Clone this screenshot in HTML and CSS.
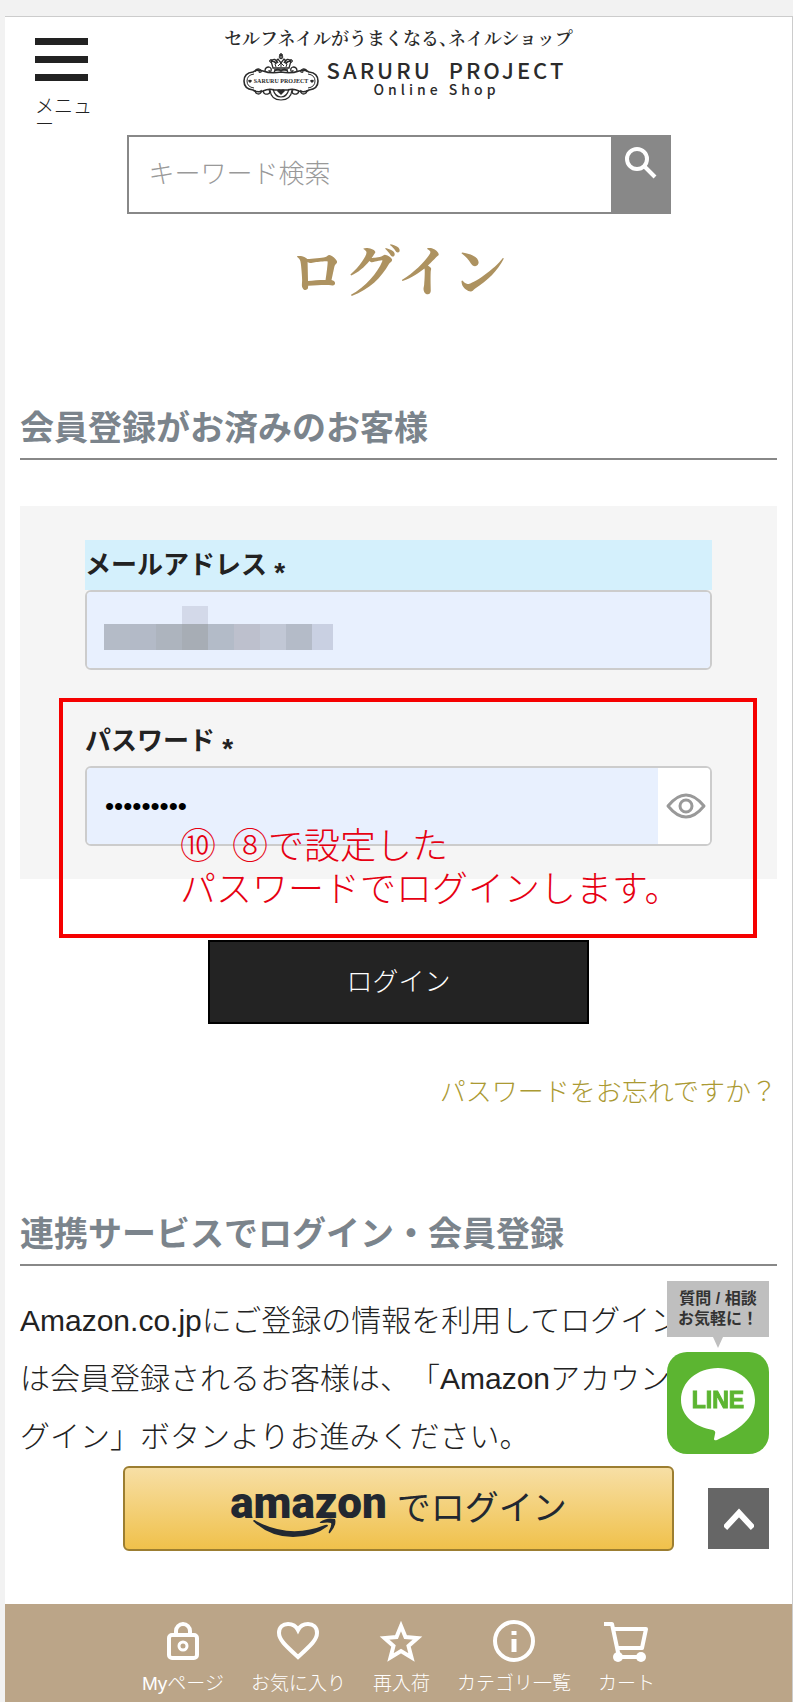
FILE: index.html
```html
<!DOCTYPE html>
<html lang="ja">
<head>
	<meta charset="UTF-8">
	<meta name="viewport" content="width=device-width, initial-scale=1">
	<title>ログイン | SARURU PROJECT</title>
	<link rel="stylesheet" href="styles.css">
</head>
<body>
	<div class="page">
		<header class="header">
			<button type="button" class="menuBtn">
				<span class="bar"></span>
				<span class="bar"></span>
				<span class="bar"></span>
				<span class="txt">メニュー</span>
			</button>
			<a href="#" class="logo">
				<span class="catch">セルフネイルがうまくなる、ネイルショップ</span>
				<span class="brand">
					<svg class="emblem" viewBox="0 0 76 48" width="76" height="48" fill="none" stroke="#2b2b2b" aria-hidden="true">
						<path d="M30 15l-2-7q4 0 5 3q0-4 2-5l3 4l3-4q2 1 2 5q1-3 5-3l-2 7z" stroke-width="1.3"/>
						<path d="M33 14l-1-3M38 14v-4M43 14l1-3M35 13l3-3l3 3" stroke-width="1"/>
						<path d="M38 0v6M36 2h4M28 8q4-4 7 2M48 8q-4-4-7 2M31 17h14" stroke-width="1.4"/>
						<circle cx="28" cy="8" r="1.4"/><circle cx="48" cy="8" r="1.4"/><circle cx="38" cy="4" r="1.8"/>
						<path d="M10 19q4-3 10-1q8 3 18 1q10 2 18-1q6-2 10 1q9 1 9 9t-9 9q-4 3-10 1q-6-3-11-1h-14q-5-2-11 1q-6 2-10-1q-9-1-9-9t9-9z" stroke-width="1.6"/>
						<path d="M11 21q-7 1-7 7t7 7M65 21q7 1 7 7t-7 7" stroke-width="1"/>
						<path d="M12 19q0-3 4-3q3 1 2 3q-2 1-2-1M22 18q0-4 4-4q3 1 2 4q-2 1-2-1M64 19q0-3-4-3q-3 1-2 3q2 1 2-1M54 18q0-4-4-4q-3 1-2 4q2 1 2-1M31 19q3-5 7-1q4-4 7 1" stroke-width="1.3"/>
						<path d="M12 37q0 4 4 4q3-1 2-4M20 38q1 4 5 3q3-1 1-4M64 37q0 4-4 4q-3-1-2-4M56 38q-1 4-5 3q-3-1-1-4" stroke-width="1.3"/>
						<path d="M27 37q1 10 11 10t11-10M30 36q2 8 8 8t8-8" stroke-width="1.2"/>
						<path d="M38 42l-4-4q1-3 4-1q3-2 4 1zM7 30l-2-2q1-2 2-1q1-1 2 1zM69 30l-2-2q1-2 2-1q1-1 2 1z" fill="#2b2b2b" stroke="none"/>
						<text x="38" y="30" class="emblemText" text-anchor="middle">SARURU PROJECT</text>
					</svg>
					<span class="names">
						<span class="name">SARURU&nbsp;&nbsp;PROJECT</span>
						<span class="sub">Online Shop</span>
					</span>
				</span>
			</a>
		</header>

		<form class="search" action="#">
			<input type="text" placeholder="キーワード検索" aria-label="キーワード検索">
			<button type="submit" aria-label="検索">
				<svg viewBox="0 0 34 34" width="34" height="34" fill="none" stroke="#fff" aria-hidden="true">
					<circle cx="13" cy="13" r="10" stroke-width="4"/>
					<path d="M20 20l11 11" stroke-width="4"/>
				</svg>
			</button>
		</form>

		<main class="main">
			<h1>ログイン</h1>

			<section class="member">
				<h2>会員登録がお済みのお客様</h2>
				<form action="#">
					<div class="formBox">
						<div class="row">
							<label for="mail" class="on">メールアドレス <span class="req">*</span></label>
							<div class="field">
								<input type="email" id="mail">
								<svg class="mosaic" viewBox="0 0 229 44" width="229" height="44" aria-hidden="true">
									<path d="M78 0h26v18h-26z" fill="#d3d9e9"/>
									<path d="M0 18h26v26H0z" fill="#b4bbc7"/>
									<path d="M26 18h26v26H26z" fill="#b3bac7"/>
									<path d="M52 18h26v26H52z" fill="#adb4be"/>
									<path d="M78 18h26v26H78z" fill="#a7adb5"/>
									<path d="M104 18h26v26h-26z" fill="#b3bbc8"/>
									<path d="M130 18h26v26h-26z" fill="#bdc0cd"/>
									<path d="M156 18h26v26h-26z" fill="#c1c7d5"/>
									<path d="M182 18h26v26h-26z" fill="#b4bbc8"/>
									<path d="M208 18h21v26h-21z" fill="#c9d0e2"/>
								</svg>
							</div>
						</div>
						<div class="row">
							<label for="pass">パスワード <span class="req">*</span></label>
							<div class="field">
								<input type="password" id="pass" value="xxxxxxxxx">
								<button type="button" class="eye" aria-label="パスワードを表示">
									<svg viewBox="0 0 40 26" width="40" height="26" fill="none" stroke="#999" stroke-width="3" aria-hidden="true">
										<path d="M2 13Q11 2 20 2t18 11Q29 24 20 24T2 13z" stroke-linejoin="round"/>
										<circle cx="20" cy="13" r="6"/>
									</svg>
								</button>
							</div>
						</div>
						<!-- 手順の説明 -->
						<div class="note">
							<p>⑩&nbsp;&nbsp;⑧で設定した<br>パスワードでログインします。</p>
						</div>
					</div>
					<button type="submit" class="loginBtn">ログイン</button>
				</form>
				<p class="forgot"><a href="#">パスワードをお忘れですか？</a></p>
			</section>

			<section class="service">
				<h2>連携サービスでログイン・会員登録</h2>
				<p class="lead">Amazon.co.jpにご登録の情報を利用してログインまた<br>は会員登録されるお客様は、「Amazonアカウントでロ<br>グイン」ボタンよりお進みください。</p>
				<button type="button" class="amazonBtn">
					<span class="amazon">amazon
						<svg viewBox="0 0 86 20" width="86" height="20" fill="#222831" aria-hidden="true">
							<path d="M1 3Q2 1 4 3Q38 21 73 7Q76 6 76 8Q62 19 41 19Q18 19 1 3z"/>
							<path d="M68 4Q75-1 83 1Q85 7 78 15Q76 16 77 13Q80 7 79 5Q76 4 70 5Q67 5 68 4z"/>
						</svg>
					</span>
					<span class="with">でログイン</span>
				</button>
			</section>
		</main>

		<nav class="footNav">
			<a href="#">
				<svg viewBox="0 0 44 44" width="44" height="44" fill="none" stroke="#fff" stroke-width="4" aria-hidden="true">
					<rect x="8" y="15" width="28" height="23" rx="3"/>
					<path d="M15 15v-4a7 7 0 0 1 14 0v4"/>
					<circle cx="22" cy="26" r="4" stroke-width="3"/>
				</svg>
				Myページ
			</a>
			<a href="#">
				<svg viewBox="0 0 44 44" width="44" height="44" fill="none" stroke="#fff" stroke-width="4" aria-hidden="true">
					<path d="M22 37C10 26 3 20 3 13C3 7 7 4 12 4C16 4 20 6 22 10C24 6 28 4 32 4C37 4 41 7 41 13C41 20 34 26 22 37z"/>
				</svg>
				お気に入り
			</a>
			<a href="#">
				<svg viewBox="0 0 44 44" width="44" height="44" fill="none" stroke="#fff" stroke-width="4" aria-hidden="true">
					<path d="M22 6l4.500 11 12 1-9 8 3 11.500-10.500-6.500-10.500 6.500 3-11.500-9-8 12-1z"/>
				</svg>
				再入荷
			</a>
			<a href="#">
				<svg viewBox="0 0 44 44" width="44" height="44" fill="none" stroke="#fff" stroke-width="4" aria-hidden="true">
					<circle cx="22" cy="21" r="19"/>
					<path d="M22 11v4M22 19v13" stroke-width="5"/>
				</svg>
				カテゴリ一覧
			</a>
			<a href="#">
				<svg viewBox="0 0 44 44" width="44" height="44" fill="none" stroke="#fff" stroke-width="4" aria-hidden="true">
					<path d="M0 4h8l7 33h22M10 9h32l-4 19H14" stroke-linejoin="round"/>
					<circle cx="14" cy="37" r="5" fill="#fff" stroke="none"/>
					<circle cx="37" cy="37" r="5" fill="#fff" stroke="none"/>
				</svg>
				カート
			</a>
		</nav>
	</div>

	<div class="floating">
		<a href="#" class="line">
			<span class="balloon">質問 / 相談<br>お気軽に！</span>
			<svg viewBox="0 0 102 102" width="102" height="102" aria-hidden="true">
				<rect width="102" height="102" rx="20" fill="#5cb531"/>
				<path d="M51 16C30 16 14 30 14 48C14 64 28 75 46 78Q49 79 48 82L47 87Q47 89 50 88C72 78 88 66 88 48C88 30 72 16 51 16z" fill="#fff"/>
				<text x="51" y="56" class="lineText" text-anchor="middle">LINE</text>
			</svg>
		</a>
		<a href="#" class="toTop" aria-label="ページの先頭へ">
			<svg viewBox="0 0 30 24" width="30" height="24" fill="none" stroke="#fff" stroke-width="6" aria-hidden="true">
				<path d="M1 21L15 6l14 15"/>
			</svg>
		</a>
	</div>
</body>
</html>
```
FILE: styles.css
```css
*{
	margin: 0;
	padding: 0;
	box-sizing: border-box;
}
body{
	padding: 16px 0 0 5px;
	background-color: #f2f2f2;
	color: #222;
	font-family: "Liberation Sans","Noto Sans CJK JP",sans-serif;
	font-size: 26px;
	font-weight: 300;
}
a{
	color: inherit;
	text-decoration: none;
}
button,input{
	border: none;
	font: inherit;
}
button{
	cursor: pointer;
}
svg{
	display: block;
}
.page{
	display: flex;
	flex-direction: column;
	min-height: calc(100vh - 16px);
	border-top: 1px solid #ccc;
	border-right: 1px solid #ccc;
	background-color: #fff;
}

/* header */
.header{
	display: grid;
	grid-template-columns: 90px 1fr 90px;
	height: 118px;
}
.menuBtn{
	display: flex;
	flex-direction: column;
	gap: 11px;
	padding: 21px 0 0 30px;
	background: none;
	color: #222;
	font-size: 19px;
	line-height: 18px;
	text-align: left;
}
.menuBtn .bar{
	width: 53px;
	height: 7px;
	background-color: #222;
}
.menuBtn .txt{
	width: 58px;
	padding-top: 6px;
	word-break: break-all;
	line-break: anywhere;
}
.logo{
	display: flex;
	flex-direction: column;
	align-items: center;
	padding-top: 8px;
	color: #2b2b2b;
}
.logo .catch{
	font-family: "Noto Serif CJK JP","Noto Sans CJK JP",serif;
	font-size: 18px;
	font-weight: 600;
	line-height: 24px;
	font-feature-settings: "halt";
	white-space: nowrap;
}
.logo .brand{
	display: flex;
	gap: 8px;
	margin-top: 4px;
	padding-left: 12px;
}
.emblemText{
	fill: #2b2b2b;
	stroke: none;
	font-family: "Liberation Serif",serif;
	font-size: 6px;
	font-weight: bold;
}
.logo .names{
	display: flex;
	flex-direction: column;
	align-items: center;
	padding-top: 4px;
	font-family: "Noto Sans CJK JP",sans-serif;
	font-weight: 500;
	white-space: nowrap;
}
.logo .name{
	font-size: 22px;
	line-height: 24px;
	letter-spacing: 3px;
}
.logo .sub{
	padding-right: 20px;
	font-size: 14px;
	line-height: 16px;
	letter-spacing: 4px;
}

/* search */
.search{
	display: flex;
	align-self: center;
	width: 544px;
	max-width: 100%;
	height: 79px;
	border: 2px solid #888;
}
.search input{
	flex: 1;
	min-width: 0;
	padding: 0 20px;
	outline: none;
}
.search input::placeholder{
	color: #999;
}
.search button{
	display: flex;
	align-items: flex-start;
	width: 58px;
	padding: 9px 0 0 13px;
	background-color: #888;
}

/* main */
.main{
	flex: 1;
	padding: 0 15px 52px;
}
h1{
	padding-top: 14px;
	color: #ad9260;
	font-family: "Noto Serif CJK JP","Noto Sans CJK JP",serif;
	font-size: 55px;
	font-weight: 700;
	line-height: 80px;
	text-align: center;
}
h2{
	border-bottom: 2px solid #888;
	color: #7b848c;
	font-size: 34px;
	font-weight: bold;
	line-height: 48px;
	padding-bottom: 6px;
}
.member h2{
	margin: 96px 0 46px;
}
.formBox{
	position: relative;
	display: flex;
	flex-direction: column;
	gap: 46px;
	padding: 34px 65px 33px;
	background-color: #f5f5f5;
}
.row label{
	display: block;
	font-weight: bold;
	line-height: 50px;
}
.row label.on{
	background-color: #d4f0fc;
}
.row .req{
	font-size: 28px;
	vertical-align: -8px;
	line-height: 24px;
}
.field{
	position: relative;
	display: flex;
	height: 80px;
	border: 2px solid #ccc;
	border-radius: 6px;
	background-color: #fff;
	overflow: hidden;
}
.field input{
	flex: 1;
	min-width: 0;
	padding: 0 18px;
	background-color: #e8f0fe;
	color: #000;
	font-family: "Liberation Sans",sans-serif;
	font-size: 26px;
	outline: none;
}
.field .mosaic{
	position: absolute;
	left: 17px;
	top: 14px;
}
.field .eye{
	display: flex;
	align-items: center;
	justify-content: center;
	width: 52px;
	padding-left: 4px;
	background-color: #fff;
}
.note{
	position: absolute;
	top: 192px;
	left: 39px;
	right: 20px;
	height: 240px;
	padding: 120px 0 0 117px;
	border: 4px solid #f50000;
	color: #e60012;
	font-family: "Noto Sans CJK JP",sans-serif;
	font-size: 36px;
	line-height: 43px;
	white-space: nowrap;
	pointer-events: none;
}
.loginBtn{
	display: block;
	width: 381px;
	max-width: 100%;
	height: 84px;
	margin: 61px auto 0;
	padding-bottom: 6px;
	border: 2px solid #000;
	background-color: #232323;
	color: #fff;
}
.forgot{
	margin-top: 48px;
	color: #ab9a33;
	line-height: 40px;
	text-align: right;
}
.service h2{
	margin: 98px 0 26px;
}
.lead{
	font-size: 30px;
	line-height: 58px;
	text-spacing-trim: space-all;
	white-space: nowrap;
}
.amazonBtn{
	display: flex;
	align-items: flex-start;
	justify-content: center;
	gap: 10px;
	width: 551px;
	max-width: 100%;
	height: 85px;
	margin: 0 auto;
	border: 2px solid #9c7e31;
	border-radius: 6px;
	background: linear-gradient(#f7dfa5,#f0c14b);
	color: #222831;
}
.amazonBtn .amazon{
	position: relative;
	font-family: Roboto,"Liberation Sans",sans-serif;
	font-size: 44px;
	font-weight: 900;
	line-height: 70px;
}
.amazonBtn .amazon svg{
	position: absolute;
	left: 22px;
	bottom: 0;
}
.amazonBtn .with{
	font-size: 34px;
	font-weight: 400;
	line-height: 80px;
}

/* bottom navigation */
.footNav{
	display: flex;
	justify-content: center;
	gap: 27px;
	height: 98px;
	padding-top: 16px;
	background-color: #bba588;
	color: #fff;
	font-size: 19px;
	line-height: 24px;
	white-space: nowrap;
}
.footNav a{
	display: flex;
	flex-direction: column;
	align-items: center;
	gap: 8px;
}

/* LINE / to top */
.floating{
	position: fixed;
	right: 24px;
	bottom: 153px;
	display: flex;
	flex-direction: column;
	align-items: flex-end;
	gap: 34px;
}
.line{
	display: flex;
	flex-direction: column;
	gap: 15px;
}
.balloon{
	position: relative;
	padding: 8px 0;
	background-color: #bfbfbf;
	color: #333;
	font-size: 16px;
	font-weight: bold;
	line-height: 20px;
	text-align: center;
}
.balloon::after{
	content: "";
	position: absolute;
	top: 100%;
	left: 46px;
	border: 5px solid transparent;
	border-top: 11px solid #bfbfbf;
	border-bottom: none;
}
.lineText{
	fill: #5cb531;
	stroke: #5cb531;
	stroke-width: 1px;
	font-family: "Liberation Sans",sans-serif;
	font-size: 23px;
	font-weight: bold;
}
.toTop{
	display: flex;
	align-items: center;
	justify-content: center;
	width: 61px;
	height: 61px;
	background-color: #666;
}
```
